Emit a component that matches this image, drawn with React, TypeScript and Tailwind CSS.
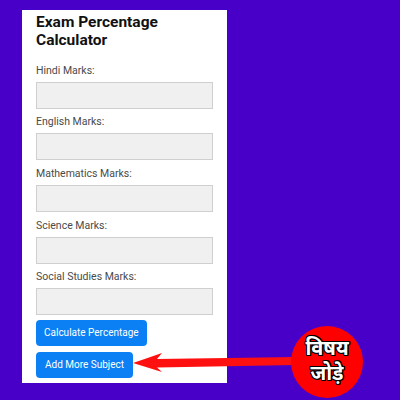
import React from "react";

const subjects = ["Hindi", "English", "Mathematics", "Science", "Social Studies"];

export default function App() {
  return (
    <div className="relative w-[400px] h-[400px] overflow-hidden bg-[#4800c8] [font-family:Roboto,'Liberation_Sans',sans-serif]">
      <div className="ml-[22px] pt-[10px]">
        <div className="w-[205px] h-[373px] bg-white px-[14px] pt-[2.8px]">
          <h1 className="text-[15.5px] leading-[18.5px] font-bold text-[#111]">
            Exam Percentage
            <br />
            Calculator
          </h1>
          {subjects.map((s, i) => (
            <div key={s} className={i === 0 ? "mt-[13.8px]" : "mt-[6.67px]"}>
              <label className="block text-[10.5px] leading-[14px] text-[#4a4a4a] mb-[4px]">
                {s} Marks:
              </label>
              <div className="h-[27px] w-[177px] bg-[#f0f0f0] border border-[#cfcfcf]" />
            </div>
          ))}
          <button className="mt-[4.3px] block h-[26px] rounded-[4px] bg-[#0b80f5] px-[8px] text-[10px] text-white">
            Calculate Percentage
          </button>
          <button className="mt-[6px] block h-[26px] rounded-[4px] bg-[#0b80f5] px-[9px] text-[10px] text-white">
            Add More Subject
          </button>
        </div>
      </div>
      <svg className="absolute left-0 top-0" width="400" height="400" viewBox="0 0 400 400">
        <polygon
          points="133,363 162,353 157,359 296,357 296,365 157,367.5 162,372"
          fill="#ff1010"
        />
      </svg>
      <div className="absolute left-[291px] top-[326px] w-[72px] h-[72px] rounded-full bg-[#ff0000] flex flex-col items-center justify-center pt-[2px] text-white font-bold text-[20px] leading-[25px] [font-family:'Noto_Sans_Devanagari','Noto_Sans',sans-serif] [text-shadow:1px_1px_0_#000,-1px_-1px_0_#000,1px_-1px_0_#000,-1px_1px_0_#000,0_1px_0_#000,0_-1px_0_#000,1px_0_0_#000,-1px_0_0_#000]">
        <span>विषय</span>
        <span>जोड़े</span>
      </div>
    </div>
  );
}
